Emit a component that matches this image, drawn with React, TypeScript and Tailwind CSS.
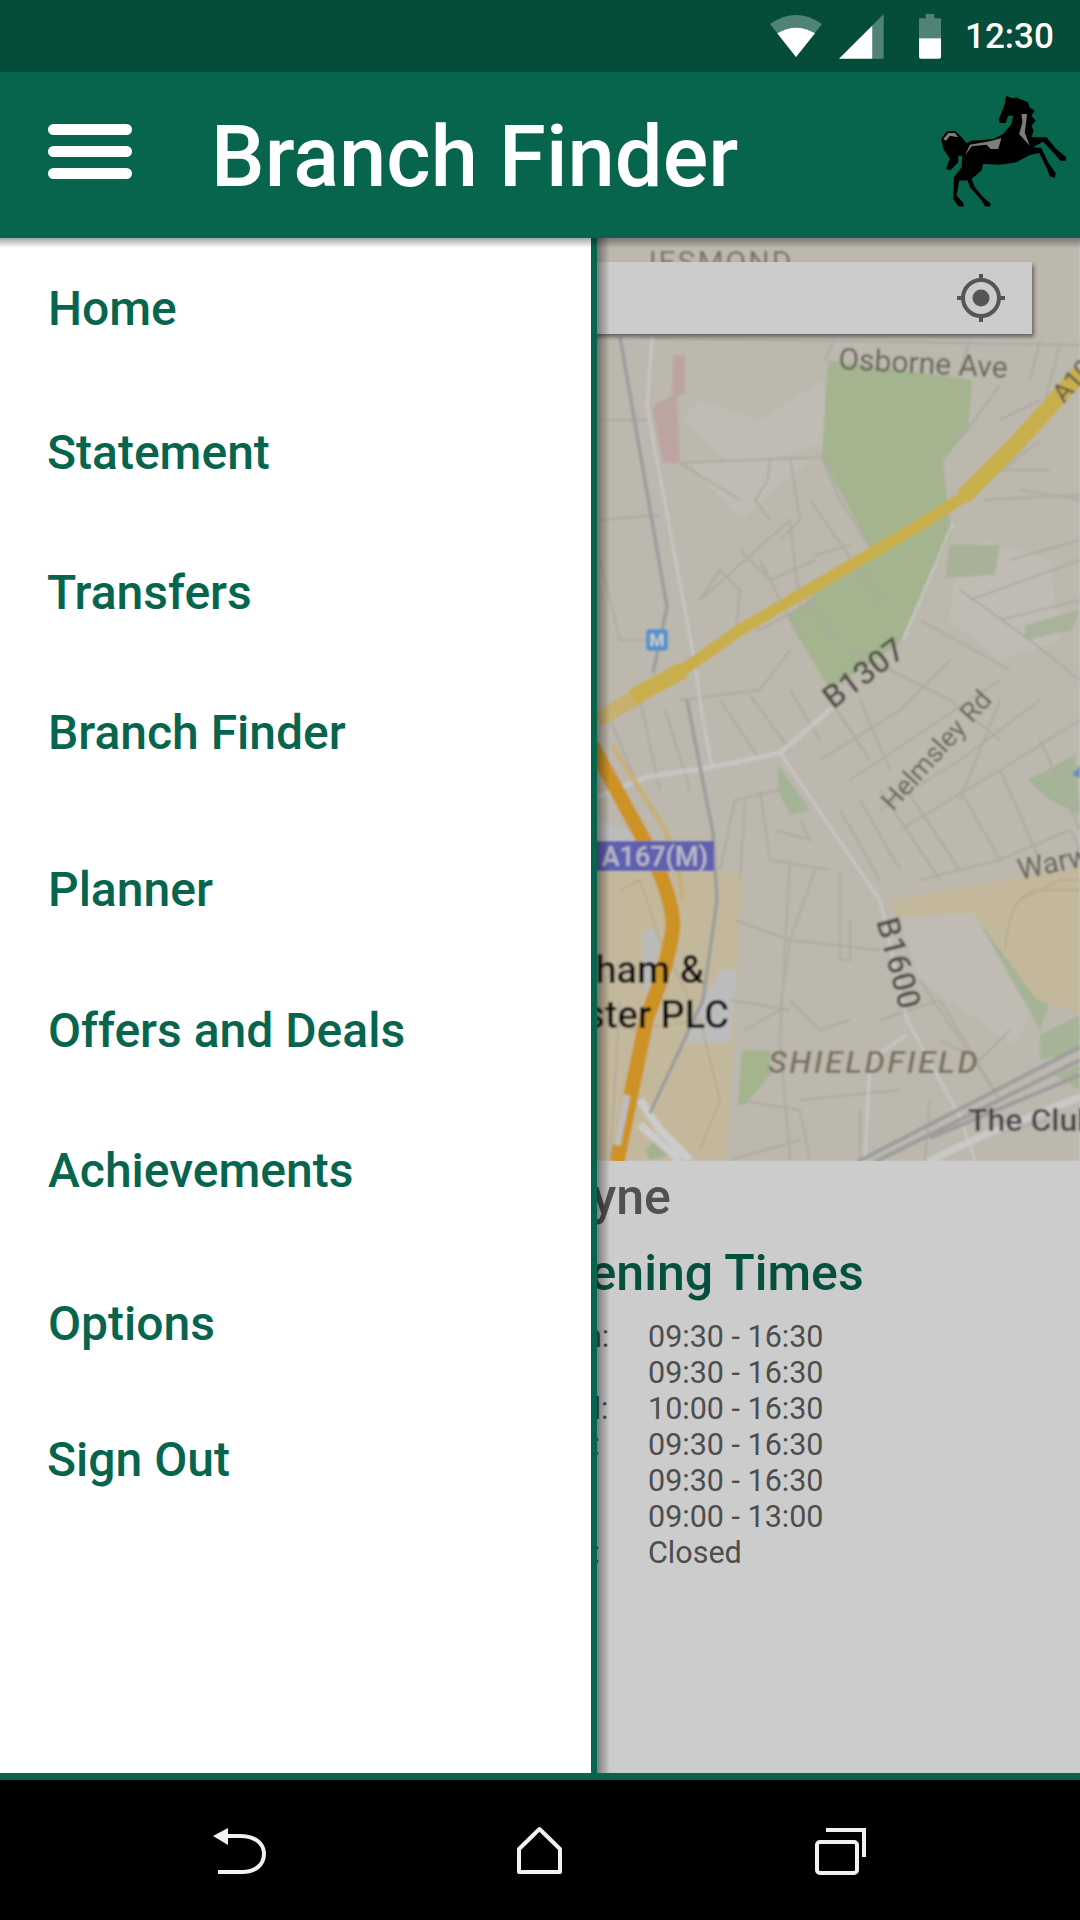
import React from 'react';

const menuItems = [
  { label: 'Home', cls: 'mt-0 pl-[48px]' },
  { label: 'Statement', cls: 'mt-[88px] pl-[47px]' },
  { label: 'Transfers', cls: 'mt-[84px] pl-[47px]' },
  { label: 'Branch Finder', cls: 'mt-[84px] pl-[48px]' },
  { label: 'Planner', cls: 'mt-[101px] pl-[48px]' },
  { label: 'Offers and Deals', cls: 'mt-[85px] pl-[48px]' },
  { label: 'Achievements', cls: 'mt-[84px] pl-[48px]' },
  { label: 'Options', cls: 'mt-[97px] pl-[48px]' },
  { label: 'Sign Out', cls: 'mt-[80px] pl-[47px]' },
];

const hours = [
  ['Mon:', '09:30 - 16:30'],
  ['Tue:', '09:30 - 16:30'],
  ['Wed:', '10:00 - 16:30'],
  ['Thu:', '09:30 - 16:30'],
  ['Fri:', '09:30 - 16:30'],
  ['Sat:', '09:00 - 13:00'],
  ['Sun:', 'Closed'],
];

// thin side streets, in page coordinates
const streets = [
  'M597 420L650 420', 'M597 520L660 515', 'M600 560L620 640L660 640', 'M680 463L822 457L840 500L870 547',
  'M770 457L768 480L755 500L770 520', 'M790 457L800 520L780 540', 'M680 463L740 500',
  'M700 600L790 520L800 610', 'M700 600L720 570L740 590L735 640', 'M740 550L770 580L815 560', 'M760 560L800 640',
  'M810 500L880 600', 'M795 580L835 640', 'M815 555L850 545', 'M815 580L860 560',
  'M815 600L760 630L745 620', 'M680 700L760 690L790 650',
  'M640 700L660 790', 'M665 710L690 790', 'M610 720L640 790',
  'M720 700L760 760', 'M750 695L790 750', 'M790 690L820 740', 'M830 700L870 760', 'M860 700L890 770',
  'M820 760L900 710L950 660', 'M850 780L940 720L1000 680', 'M880 810L960 760L1040 700', 'M900 830L1000 770L1080 720',
  'M850 650L950 700L1000 740', 'M920 620L1010 670', 'M960 590L1030 640L1080 680', 'M1000 620L1080 600',
  'M1010 560L1080 540', 'M970 600L1080 560', 'M1020 490L1080 500', 'M983 500L1080 495', 'M990 480L1040 440',
  'M960 440L1000 385', 'M970 340L960 372', 'M1040 340L1030 380', 'M1060 345L1040 420', 'M640 338L1080 345',
  'M835 338L825 360', 'M1000 420L1040 400', 'M1000 470L1050 470',
  'M720 870L735 800L780 790', 'M745 800L740 880', 'M760 790L770 860L830 870', 'M775 830L810 840L800 820',
  'M735 920L790 940L780 1010L745 1030', 'M790 940L880 950', 'M790 860L780 1040L790 1160', 'M815 870L790 940',
  'M840 870L840 960L850 960L850 920', 'M790 1000L820 1030L850 1020',
  'M730 1000L790 1010', 'M740 1100L800 1110', 'M800 1100L900 1090', 'M880 1020L940 1000L1000 1100',
  'M920 980L1000 1100', 'M940 1040L980 1060L1010 1030', 'M860 1110L860 1160', 'M800 1110L810 1160',
  'M1000 700L960 800', 'M960 790L1000 860L1070 830L1080 850', 'M1000 770L1040 860', 'M1040 740L1080 830',
  'M920 880L1000 860', 'M840 810L880 880', 'M860 800L900 870', 'M880 790L940 880', 'M900 780L960 870',
  'M620 1000L610 1160', 'M730 1160L800 1140', 'M925 1162L930 1100', 'M970 1140L1050 1120',
];

function BlackHorse() {
  return (
    <svg width="128" height="115" viewBox="720 285 385 345" className="shrink-0">
      <path
        fill="#000"
        d="M920 290L935 297L950 295L985 310L990 325L1005 335L995 350L1008 365L995 380L1002 395L995 415L1040 415L1070 450L1100 475L1098 485L1082 485L1062 462L1030 428L1000 445L1025 447L1045 490L1068 522L1065 537L1050 532L1042 510L1018 462L990 468L950 490L900 497L850 495L845 515L815 540L825 565L850 595L873 615L870 624L855 622L845 605L810 565L803 545L778 545L770 590L790 612L792 623L775 622L760 600L762 535L785 505L787 470L775 470L775 490L750 515L738 510L745 490L750 480L730 450L723 420L740 397L765 395L785 415L800 432L815 425L880 420L910 405L935 375L940 350L925 350L918 372L900 372L897 360L915 315L917 300Z"
      />
      <path fill="#7d7d7d" d="M965 345L982 345L975 400L990 440L958 405L968 370Z" />
      <path fill="#7d7d7d" d="M795 470L810 437L870 427L905 417L895 450L872 450L860 437L815 442Z" />
      <path fill="#7d7d7d" d="M730 420L745 402L765 402L775 415L750 410L738 425Z" />
    </svg>
  );
}

function StatusIcons() {
  return (
    <svg width="190" height="72" viewBox="760 0 190 72" className="shrink-0">
      <path fill="#fff" fillOpacity="0.3" d="M770 24Q796 6 822 24L796 57Z" />
      <path fill="#fff" d="M777.3 33.3Q796 22 815 33.3L796 57Z" />
      <path fill="#fff" fillOpacity="0.3" d="M872.3 25.4L883.7 14V58.7H872.3Z" />
      <path fill="#fff" d="M839 58.7L872.3 25.4V58.7Z" />
      <path fill="#fff" fillOpacity="0.3" d="M925.7 14H934.3V18.3H941V38.3H919V18.3H925.7Z" />
      <path fill="#fff" d="M919 38.3H941V57Q941 58.7 939 58.7H921Q919 58.7 919 57Z" />
    </svg>
  );
}

function MapView() {
  return (
    <svg viewBox="0 238 1080 923" className="block h-[923px] w-full">
      <defs>
        <filter id="soft" x="-2%" y="-2%" width="104%" height="104%">
          <feGaussianBlur stdDeviation="1.1" />
        </filter>
      </defs>
      <g filter="url(#soft)" style={{ fontFamily: 'Roboto, sans-serif' }}>
        <rect x="0" y="238" width="1080" height="923" fill="#ebe6da" />
        {/* lighter plots */}
        <path fill="#f0ece2" d="M680 420L740 470L830 440L822 380L760 420L700 400Z" />
        <path fill="#f0ece2" d="M690 463L740 520L810 460Z" />
        <path fill="#f0ece2" d="M955 560L985 540L1050 560L1060 640L1000 660L950 620Z" />
        <path fill="#f0ece2" d="M900 917L973 913L1037 1000L1015 1045L920 980Z" />
        {/* parks */}
        <path fill="#cce1b3" d="M828 360L972 380L968 430L943 460L947 500L952 533L923 593L900 643L830 690L787 617L870 547L822 457Z" />
        <path fill="#d3dfc0" d="M950 545L1000 545L995 575L945 578Z" />
        <path fill="#d3e0c0" d="M1025 625L1080 610L1072 630L1025 640Z" />
        <path fill="#cfe0bd" d="M778 765L810 810L790 815L778 790Z" />
        <path fill="#cfe0bd" d="M1028 780L1075 755L1080 815L1050 800Z" />
        <path fill="#cce1b3" d="M742 1050L770 1050L770 1075L745 1105L738 1105Z" />
        <path fill="#cfe0bd" d="M975 915L985 910L1050 1000L1040 1030Z" />
        <path fill="#cfe0bd" d="M1040 1035L1080 1015L1080 1050L1040 1060Z" />
        <path fill="#cfe0bd" d="M1055 1075L1080 1065L1080 1090Z" />
        <path fill="#7db5e5" d="M1072 775L1080 765V778Z" />
        <path fill="#eccfc9" d="M673 355L685 355L685 393L677 397L680 463L663 463L652 407L672 395Z" />
        {/* tan areas */}
        <path fill="#f5e7c4" d="M597 873L743 873L727 1160L597 1160Z" />
        <path fill="#f5e7c4" d="M887 900L1080 867V1013L1037 1000L973 913L900 917Z" />
        <path fill="#e9e9e9" d="M643 930L660 930L650 1000L643 985Z" />
        <path fill="#ececec" d="M720 970L737 970L730 1043L683 1043Z" />
        <path fill="#ececec" d="M597 820L650 840L600 860Z" />
        <path fill="#ccdfb9" d="M645 1150L665 1130L670 1155L650 1160Z" />
        <path fill="none" stroke="#e7d8b2" strokeWidth="2" d="M620 890L640 880L660 940L690 1000M630 1030L700 1020L720 1100L700 1150M1020 900L1060 880H1080M1005 950Q1010 890 1040 890H1080" />
        {/* side streets */}
        <path fill="none" stroke="#dad5ca" strokeWidth="2" d={streets.join('')} />
        {/* main white roads */}
        <path fill="none" stroke="#fff" strokeOpacity="0.7" strokeWidth="3" d="M652 337L647 407L693 653L703 720L712 767" />
        <path fill="none" stroke="#fff" strokeOpacity="0.7" strokeWidth="5" d="M597 797L647 777L712 767L780 753L833 707" />
        <path fill="none" stroke="#fff" strokeOpacity="0.7" strokeWidth="3" d="M903 640L953 523M780 753L880 900L907 1020L960 1117L975 1160M907 1035L870 1060L865 1160" />
        <path fill="none" stroke="#fff" strokeOpacity="0.85" strokeWidth="7" d="M927 1162L980 1137L1080 1097" />
        <path fill="none" stroke="#fff" strokeWidth="8" d="M640 1100L660 1130L690 1160M640 1125L680 1160" />
        {/* railway */}
        <path fill="none" stroke="#c4c4c4" strokeWidth="3.5" d="M620 337L667 607L653 673M687 700L713 833L717 900L703 1000L650 1113" />
        <path fill="none" stroke="#c4c4c4" strokeWidth="4" d="M857 1162L1080 1047M875 1162L1080 1060M930 1138L1080 1075" />
        {/* A167(M) */}
        <path fill="none" stroke="#f9dd96" strokeWidth="5" d="M612 745L665 830Q682 870 682 900" />
        <path fill="none" stroke="#ffb82e" strokeWidth="15" d="M592 745L640 833Q672 890 673 925Q670 960 647 1017L617 1162" />
        <path fill="none" stroke="#eeeeee" strokeWidth="7" d="M627 1095L617 1145" />
        {/* yellow A road */}
        <path fill="none" stroke="#f9dc8c" strokeWidth="16" d="M640 695L597 720" />
        <path fill="none" stroke="#fbdb5f" strokeWidth="12" strokeLinejoin="round" d="M683 670L740 630L923 523L963 497" />
        <path fill="none" stroke="#fbdb5f" strokeWidth="17" strokeLinejoin="round" d="M683 670L633 697M963 497L1013 447L1080 373" />
        {/* metro sign */}
        <rect x="646" y="629" width="22" height="22" rx="4" fill="#6db9ff" />
        <text x="657" y="646" textAnchor="middle" fontSize="17" fontWeight="700" fill="#fff">M</text>
        {/* labels */}
        <text x="640" y="272" fontSize="30" letterSpacing="2" fill="#9a9077">JESMOND</text>
        <text x="838" y="369" fontSize="30" fill="#7f7a6e" transform="rotate(3 838 369)">Osborne Ave</text>
        <text x="1064" y="404" fontSize="26" fill="#6f6a5c" transform="rotate(-48 1064 404)">A1058</text>
        <text x="833" y="710" fontSize="32" fontWeight="500" fill="#6a665c" transform="rotate(-37 833 710)">B1307</text>
        <text x="893" y="812" fontSize="27" fill="#7f7a6e" transform="rotate(-48 893 812)">Helmsley Rd</text>
        <text x="1020" y="880" fontSize="29" fill="#7f7a6e" transform="rotate(-12 1020 880)">Warwick</text>
        <text x="876" y="921" fontSize="32" fontWeight="500" fill="#6a665c" transform="rotate(75 876 921)">B1600</text>
        <text x="768" y="1073" fontSize="32" fontStyle="italic" letterSpacing="2.5" fontWeight="500" fill="#9a9077">SHIELDFIELD</text>
        <text x="968" y="1131" fontSize="32" fontWeight="500" fill="#555">The Club</text>
        <rect x="400" y="841" width="314" height="30" fill="#7878dc" />
        <text x="708" y="866" textAnchor="end" fontSize="27" fontWeight="500" fill="#e8e8f8">A167(M)</text>
        <text x="704" y="983" textAnchor="end" fontSize="38" fontWeight="500" fill="#111">Cheltenham &amp;</text>
        <text x="729" y="1028" textAnchor="end" fontSize="38" fontWeight="500" fill="#111">Gloucester PLC</text>
      </g>
    </svg>
  );
}

export default function App() {
  return (
    <div className="relative flex h-[1920px] w-[1080px] flex-col overflow-hidden bg-white font-['Roboto',sans-serif]">
      {/* status bar */}
      <div className="z-30 flex h-[72px] shrink-0 items-center justify-end bg-[#054c3b] pr-[25px]">
        <StatusIcons />
        <span className="ml-[15px] w-[90px] text-[35px] font-medium leading-none text-white">12:30</span>
      </div>

      {/* toolbar */}
      <div className="z-30 flex h-[166px] shrink-0 items-center bg-[#07654e] pr-[12px]">
        <div className="ml-[48px] -mt-[7px] flex w-[84px] flex-col gap-[11px]">
          <div className="h-[11px] rounded-full bg-white" />
          <div className="h-[11px] rounded-full bg-white" />
          <div className="h-[11px] rounded-full bg-white" />
        </div>
        <div className="ml-[79px] mt-[4px] text-[85px] font-medium leading-none text-white">Branch Finder</div>
        <div className="ml-auto -mt-[7px]">
          <BlackHorse />
        </div>
      </div>

      {/* page behind the drawer */}
      <div className="relative h-[923px] shrink-0">
        <MapView />
        <div className="absolute left-0 top-[24px] flex h-[72px] w-[1032px] items-center justify-end bg-white pr-[27px] shadow-[2px_3px_4px_rgba(0,0,0,0.45)]">
          <svg width="48" height="48" viewBox="0 0 48 48">
            <circle cx="24" cy="24" r="18" fill="none" stroke="#6b6b6b" strokeWidth="4" />
            <circle cx="24" cy="24" r="8.5" fill="#6b6b6b" />
            <path stroke="#6b6b6b" strokeWidth="4" d="M24 0V7M24 41V48M0 24H7M41 24H48" />
          </svg>
        </div>
      </div>
      <div className="h-[612px] shrink-0 bg-white">
        <div className="pl-[193px] pt-[11px] text-[50px] font-medium leading-[50px] text-[#666666]">Newcastle upon Tyne</div>
        <div className="pl-[527px] pt-[24px] text-[50px] font-medium leading-[54px] text-[#07654e]">Opening Times</div>
        <div className="mt-[19px] pl-[541px]">
          {hours.map(([day, time]) => (
            <div key={day} className="flex h-[36px] items-center text-[30.5px] text-[#626262]">
              <span className="w-[107px]">{day}</span>
              <span>{time}</span>
            </div>
          ))}
        </div>
      </div>

      {/* bottom edge + nav bar */}
      <div className="z-30 h-[7px] shrink-0 bg-[#07654e]" />
      <div className="z-30 h-[140px] shrink-0 bg-black">
        <svg width="1080" height="140" viewBox="0 1780 1080 140" fill="none" stroke="#f2f2f2" strokeWidth="4">
          <path fill="#f2f2f2" stroke="none" d="M213 1836L228 1828V1845Z" />
          <path d="M226 1836H240C256 1836 264 1844 264 1854C264 1865 255 1872 242 1872H218" />
          <path strokeLinejoin="round" d="M539.5 1829L560 1849V1872H519V1849Z" />
          <rect x="817" y="1842" width="40" height="31" rx="3" />
          <path d="M826 1830H864V1857" />
        </svg>
      </div>

      {/* dim layer */}
      <div className="absolute left-0 top-[238px] z-10 h-[1535px] w-[1080px] bg-black/20" />

      {/* drawer */}
      <div className="absolute left-0 top-[238px] z-20 h-[1536px] w-[597px] border-r-[6px] border-[#07654e] bg-white pt-[43px]">
        {menuItems.map((item) => (
          <div key={item.label} className={`h-[56px] text-[48px] font-medium leading-[56px] text-[#07654e] ${item.cls}`}>
            {item.label}
          </div>
        ))}
      </div>
      {/* drawer edge shadow */}
      <div className="absolute left-[597px] top-[238px] z-20 h-[1535px] w-[13px] bg-gradient-to-r from-black/40 to-transparent" />
      {/* toolbar shadow */}
      <div className="absolute left-0 top-[238px] z-20 h-[10px] w-[1080px] bg-gradient-to-b from-black/35 to-transparent" />
    </div>
  );
}
